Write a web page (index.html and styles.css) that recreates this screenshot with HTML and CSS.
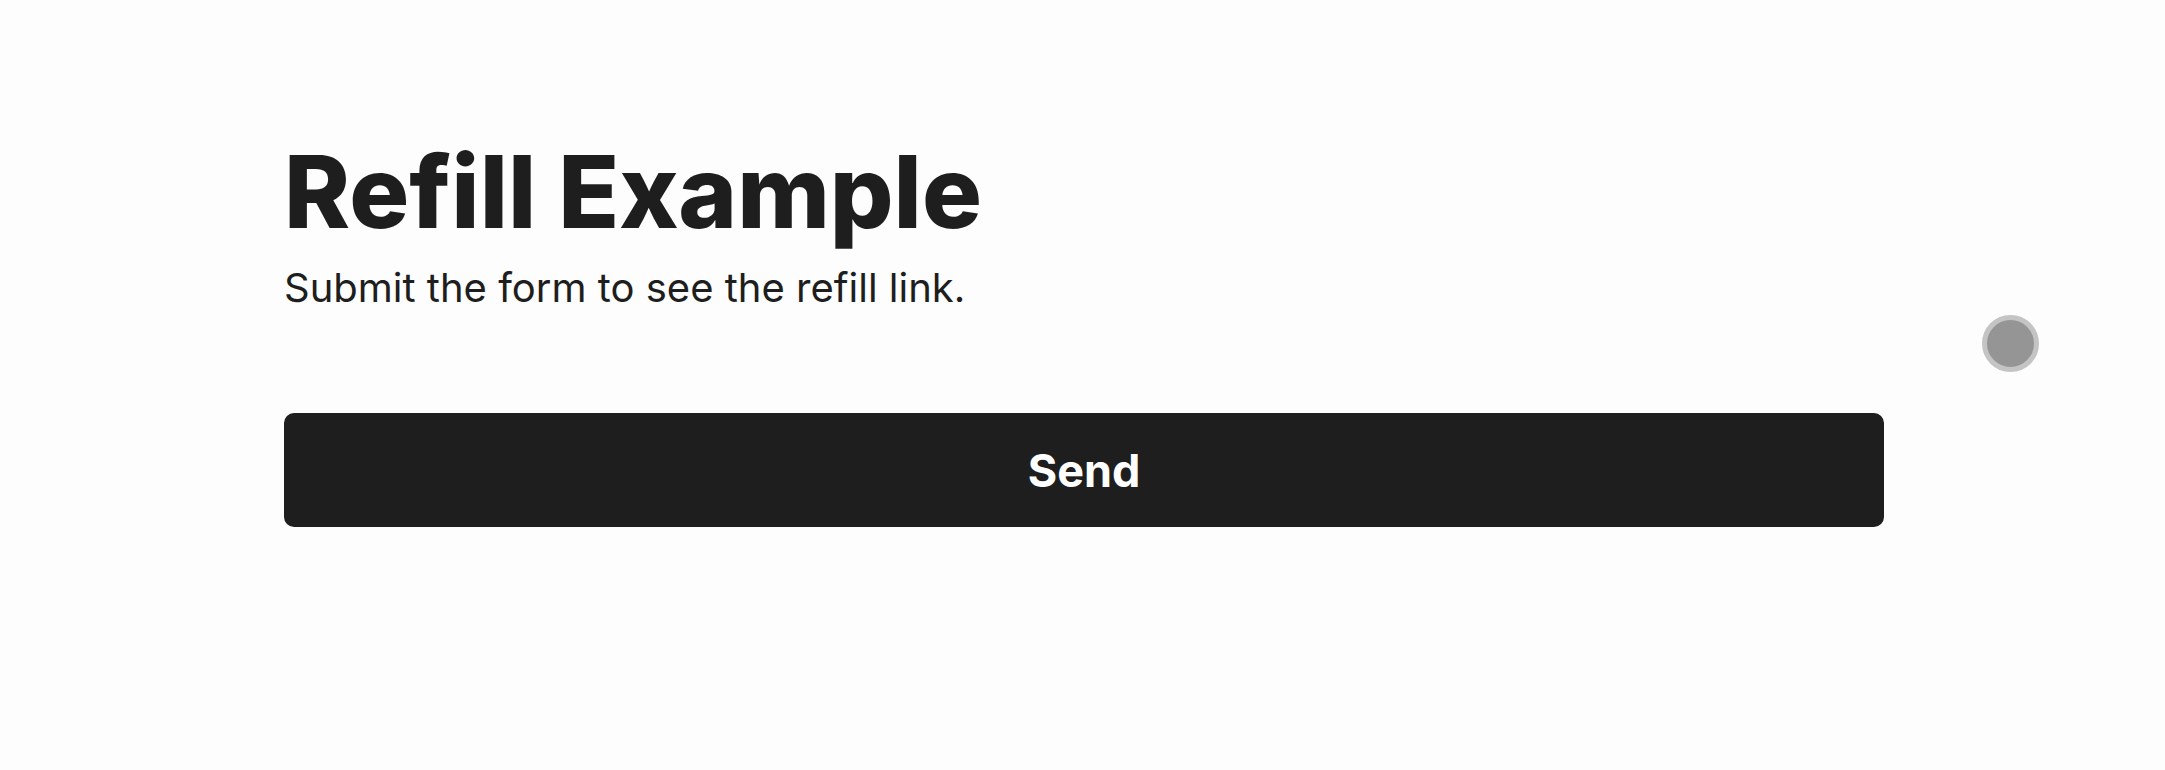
FILE: index.html
```html
<!DOCTYPE html>
<html lang="en">
<head>
<meta charset="utf-8">
<title>Refill Example</title>
<link rel="stylesheet" href="styles.css">
</head>
<body>
<main class="page">
  <h1 class="title">Refill Example</h1>
  <p class="subtitle">Submit the form to see the refill link.</p>
  <form class="form">
    <button type="button" class="send">Send</button>
  </form>
</main>
<div class="dot"></div>
</body>
</html>
```

FILE: styles.css
```css
html, body {
  margin: 0;
  padding: 0;
  background: #fdfdfd;
}
body {
  font-family: Inter, "Noto Sans", sans-serif;
  color: #1e1e1e;
}
.page {
  width: 1600px;
  padding: 132px 0 0 284px;
  display: flex;
  flex-direction: column;
}
.title {
  margin: 0;
  font-size: 100px;
  line-height: 120px;
  font-weight: 800;
}
.subtitle {
  margin: 6px 0 0;
  font-size: 40px;
  line-height: 60px;
  font-weight: 400;
}
.form {
  margin-top: 95px;
}
.send {
  display: block;
  width: 100%;
  height: 114px;
  border: none;
  border-radius: 10px;
  background: #1e1e1e;
  color: #ffffff;
  font-family: Inter, "Noto Sans", sans-serif;
  font-size: 45px;
  font-weight: 700;
  cursor: pointer;
}
.dot {
  position: absolute;
  left: 1982px;
  top: 315px;
  width: 47px;
  height: 47px;
  border-radius: 50%;
  background: #959595;
  border: 5px solid #c4c4c4;
}
```
